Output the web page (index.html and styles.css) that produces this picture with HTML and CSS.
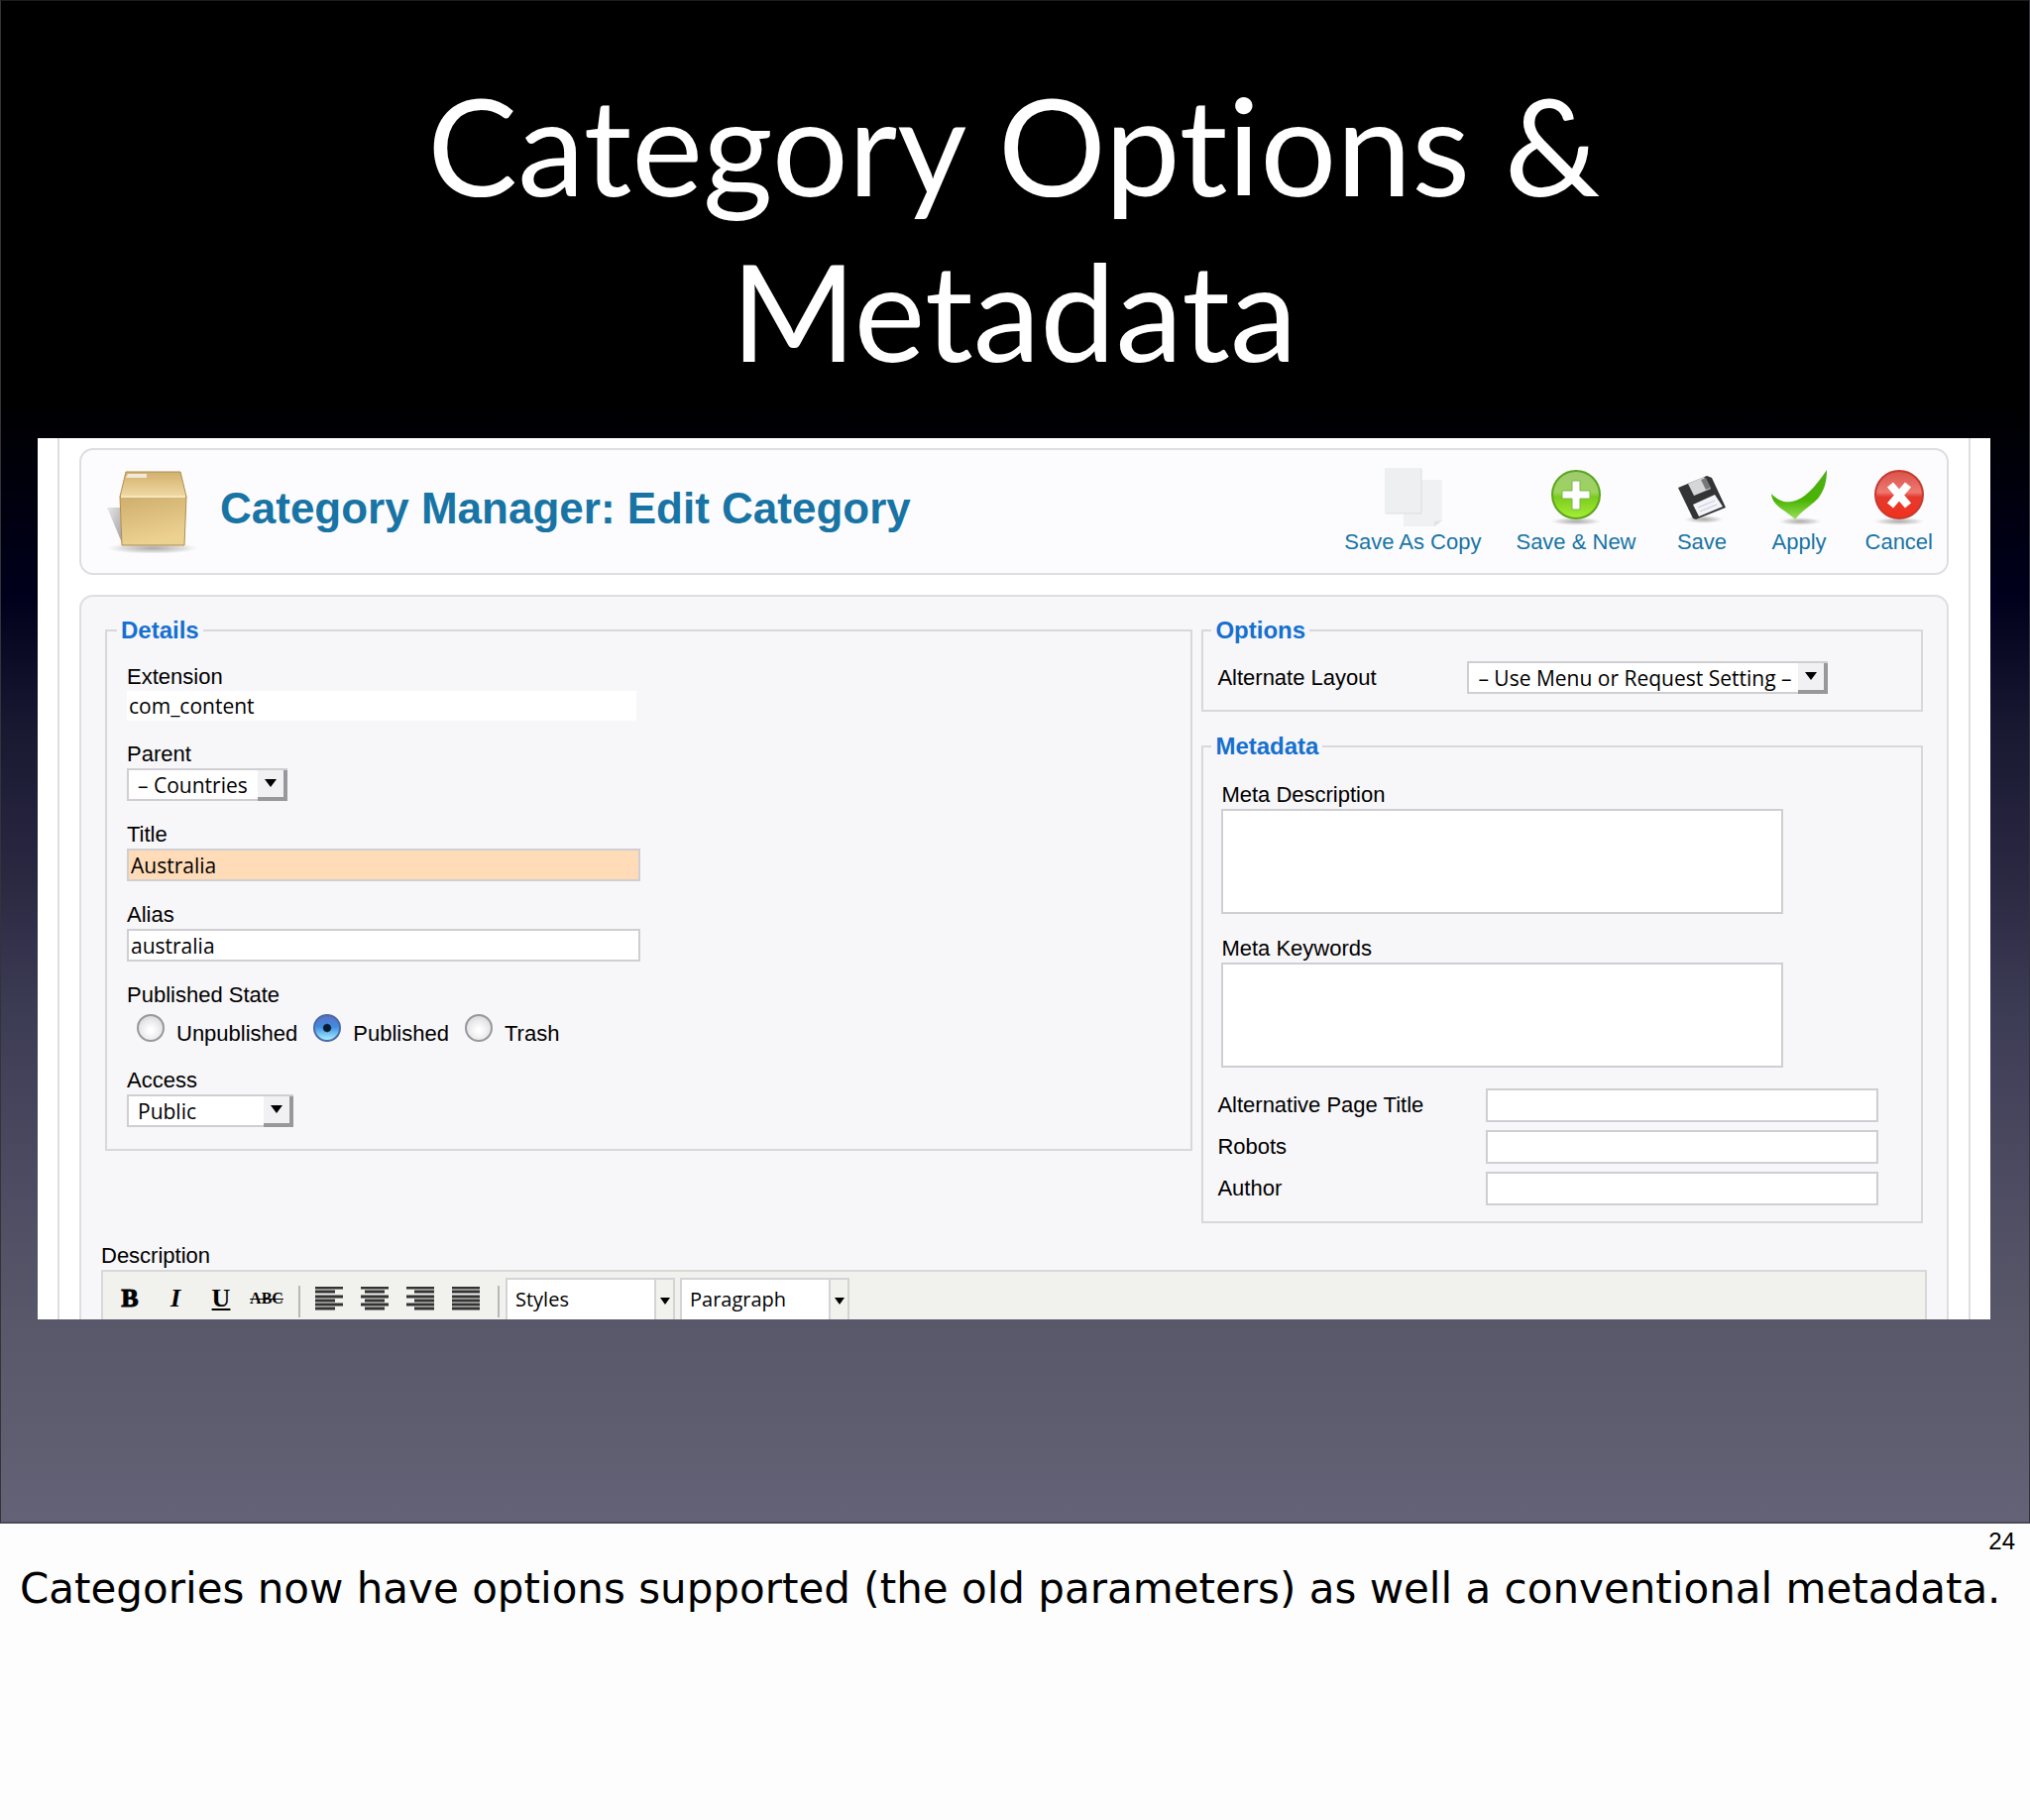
FILE: index.html
```html
<!DOCTYPE html>
<html lang="en">
<head>
    <meta charset="UTF-8">
    <meta name="viewport" content="width=device-width, initial-scale=1.0">
    <title>Category Options &amp; Metadata</title>
    <link rel="stylesheet" href="styles.css">
</head>
<body>

    <section class="slide">
        <h1>Category Options &amp;<br>Metadata</h1>

        <div class="screen">
            <div class="page">
                <header class="toolbar">
                    <svg class="box-icon" width="96" height="84" viewBox="0 0 96 84">
                        <defs>
                            <linearGradient id="boxFront" x1="0" y1="0" x2="0.3" y2="1">
                                <stop offset="0" stop-color="#cfae6c"/>
                                <stop offset="1" stop-color="#ecd291"/>
                            </linearGradient>
                            <linearGradient id="boxTop" x1="0" y1="0" x2="0" y2="1">
                                <stop offset="0" stop-color="#d2b06c"/>
                                <stop offset="1" stop-color="#f0d9a4"/>
                            </linearGradient>
                            <linearGradient id="boxShade" x1="0" y1="0" x2="1" y2="1">
                                <stop offset="0" stop-color="#e8e8ea"/>
                                <stop offset="1" stop-color="#9c9c9e"/>
                            </linearGradient>
                            <radialGradient id="floor">
                                <stop offset="0" stop-color="#aaa"/>
                                <stop offset="0.7" stop-color="#e2e2e2"/>
                                <stop offset="1" stop-color="#eee" stop-opacity="0"/>
                            </radialGradient>
                        </defs>
                        <ellipse cx="48" cy="79" rx="47" ry="6" fill="url(#floor)"/>
                        <path d="M2 38h13l3 38z" fill="url(#boxShade)"/>
                        <path d="M21 2h55l6 25H15z" fill="url(#boxTop)" stroke="#b08d4c"/>
                        <path d="M15 27h67l-2 49H17z" fill="url(#boxFront)" stroke="#b08d4c"/>
                        <path d="M16 27h65" stroke="#f6e6be" stroke-width="2"/>
                        <path d="M23 4h19v4H21z" fill="#eee9d8"/>
                    </svg>
                    <h2>Category Manager: Edit Category</h2>
                    <nav class="actions">
                        <button type="button">
                            <svg width="60" height="64" viewBox="0 0 60 64">
                                <path d="M21 14h39v41l-7 6H21z" fill="#f0f1f2"/>
                                <path d="M60 55l-8 1v5z" fill="#e2e3e4"/>
                                <path d="M2 2h37v46H2z" fill="#eeeff0"/>
                                <path d="M39 3v45H3" fill="none" stroke="#dcdddf"/>
                            </svg>
                            Save As Copy
                        </button>
                        <button type="button">
                            <svg width="60" height="64" viewBox="0 0 60 64">
                                <defs>
                                    <linearGradient id="green" x1="0" y1="0" x2="0" y2="1">
                                        <stop offset="0" stop-color="#9fca72"/>
                                        <stop offset="0.45" stop-color="#9cd45c"/>
                                        <stop offset="0.55" stop-color="#7ccc1c"/>
                                        <stop offset="1" stop-color="#a6ee38"/>
                                    </linearGradient>
                                </defs>
                                <ellipse cx="30" cy="56" rx="26" ry="4" fill="url(#floor)"/>
                                <circle cx="30" cy="29" r="24" fill="url(#green)" stroke="#5ba51c" stroke-width="2"/>
                                <path d="M26 15h8v10h10v8H34v11h-8V33H16v-8h10z" fill="#fff" stroke="#7cb84a"/>
                            </svg>
                            Save &amp; New
                        </button>
                        <button type="button">
                            <svg width="60" height="64" viewBox="0 0 60 64">
                                <ellipse cx="32" cy="54" rx="20" ry="4" fill="url(#floor)"/>
                                <path d="M6 22l29-12 5 2 14 30-30 12-3-1z" fill="#333436"/>
                                <path d="M16 18l16-7 7 12-17 7z" fill="#d5d6d8"/>
                                <path d="M29 14l5-2 5 10-5 2z" fill="#77787b"/>
                                <path d="M21 39l22-10 8 12-24 10z" fill="#f4f4f8"/>
                                <path d="M26 42l17-7M28 46l17-7" stroke="#c5c7e0"/>
                            </svg>
                            Save
                        </button>
                        <button type="button">
                            <svg width="60" height="64" viewBox="0 0 60 64">
                                <defs>
                                    <linearGradient id="check" x1="0" y1="0" x2="0" y2="1">
                                        <stop offset="0" stop-color="#4fae1c"/>
                                        <stop offset="0.6" stop-color="#48b400"/>
                                        <stop offset="1" stop-color="#9be05a"/>
                                    </linearGradient>
                                </defs>
                                <ellipse cx="31" cy="56" rx="22" ry="4" fill="url(#floor)"/>
                                <path d="M2 28c8 8 14 9 20 8C36 34 47 20 58 4c0 13-3 21-9 29-8 8-16 12-23 21C16 44 3 41 2 28z" fill="url(#check)"/>
                            </svg>
                            Apply
                        </button>
                        <button type="button">
                            <svg width="60" height="64" viewBox="0 0 60 64">
                                <defs>
                                    <linearGradient id="red" x1="0" y1="0" x2="0" y2="1">
                                        <stop offset="0" stop-color="#d9534a"/>
                                        <stop offset="0.45" stop-color="#ee7870"/>
                                        <stop offset="0.55" stop-color="#e43a2e"/>
                                        <stop offset="1" stop-color="#f4301c"/>
                                    </linearGradient>
                                </defs>
                                <ellipse cx="30" cy="56" rx="26" ry="4" fill="url(#floor)"/>
                                <circle cx="30" cy="29" r="24" fill="url(#red)" stroke="#c63a30" stroke-width="2"/>
                                <path d="M21 19l18 21M39 19L21 40" stroke="#fff" stroke-width="8"/>
                            </svg>
                            Cancel
                        </button>
                    </nav>
                </header>

                <form class="content">
                    <div class="columns">
                        <fieldset class="details">
                            <legend>Details</legend>
                            <div class="field">
                                <label for="extension">Extension</label>
                                <input class="plain" type="text" id="extension" value="com_content" readonly>
                            </div>
                            <div class="field">
                                <label for="parent">Parent</label>
                                <span class="select parent"><select id="parent"><option>– Countries</option></select></span>
                            </div>
                            <div class="field">
                                <label for="title">Title</label>
                                <input class="required" type="text" id="title" value="Australia">
                            </div>
                            <div class="field">
                                <label for="alias">Alias</label>
                                <input type="text" id="alias" value="australia">
                            </div>
                            <div class="field" role="radiogroup" aria-labelledby="state">
                                <span class="label" id="state">Published State</span>
                                <div class="radios">
                                    <input type="radio" name="published" id="unpublished">
                                    <label for="unpublished">Unpublished</label>
                                    <input type="radio" name="published" id="published" checked>
                                    <label for="published">Published</label>
                                    <input type="radio" name="published" id="trash">
                                    <label for="trash">Trash</label>
                                </div>
                            </div>
                            <div class="field">
                                <label for="access">Access</label>
                                <span class="select access"><select id="access"><option>Public</option></select></span>
                            </div>
                        </fieldset>

                        <div class="side">
                            <fieldset class="options">
                                <legend>Options</legend>
                                <div class="row">
                                    <label for="layout">Alternate Layout</label>
                                    <span class="select layout"><select id="layout"><option>– Use Menu or Request Setting –</option></select></span>
                                </div>
                            </fieldset>

                            <fieldset class="metadata">
                                <legend>Metadata</legend>
                                <div class="field">
                                    <label for="metadesc">Meta Description</label>
                                    <textarea id="metadesc"></textarea>
                                </div>
                                <div class="field">
                                    <label for="metakey">Meta Keywords</label>
                                    <textarea id="metakey"></textarea>
                                </div>
                                <div class="rows">
                                    <div class="row">
                                        <label for="pagetitle">Alternative Page Title</label>
                                        <input type="text" id="pagetitle">
                                    </div>
                                    <div class="row">
                                        <label for="robots">Robots</label>
                                        <input type="text" id="robots">
                                    </div>
                                    <div class="row">
                                        <label for="author">Author</label>
                                        <input type="text" id="author">
                                    </div>
                                </div>
                            </fieldset>
                        </div>
                    </div>

                    <div class="description">
                        <span class="label">Description</span>
                        <div class="editor-bar">
                            <button type="button" class="bold">B</button>
                            <button type="button" class="italic">I</button>
                            <button type="button" class="underline">U</button>
                            <button type="button" class="strike">ABC</button>
                            <span class="divider"></span>
                            <button type="button" aria-label="Align left">
                                <svg width="28" height="24" viewBox="0 0 28 24"><path d="M0 1h28M0 5h20M0 10h28M0 14h20M0 18h28M0 22h20" stroke="#333" stroke-width="3"/></svg>
                            </button>
                            <button type="button" aria-label="Align center">
                                <svg width="28" height="24" viewBox="0 0 28 24"><path d="M0 1h28M4 5h20M0 10h28M4 14h20M0 18h28M4 22h20" stroke="#333" stroke-width="3"/></svg>
                            </button>
                            <button type="button" aria-label="Align right">
                                <svg width="28" height="24" viewBox="0 0 28 24"><path d="M0 1h28M8 5h20M0 10h28M8 14h20M0 18h28M8 22h20" stroke="#333" stroke-width="3"/></svg>
                            </button>
                            <button type="button" aria-label="Justify">
                                <svg width="28" height="24" viewBox="0 0 28 24"><path d="M0 1h28M0 5h28M0 10h28M0 14h28M0 18h28M0 22h28" stroke="#333" stroke-width="3"/></svg>
                            </button>
                            <span class="divider"></span>
                            <span class="picker"><select aria-label="Styles"><option>Styles</option></select></span>
                            <span class="picker"><select aria-label="Format"><option>Paragraph</option></select></span>
                        </div>
                    </div>
                </form>
            </div>
        </div>
    </section>

    <footer class="notes">
        <span class="page-number">24</span>
        <p>Categories now have options supported (the old parameters) as well a conventional metadata.</p>
    </footer>

</body>
</html>
```
FILE: styles.css
```css
*,
*::before,
*::after {
    box-sizing: border-box;
}

body {
    margin: 0;
    background: #fdfdfd;
    color: #000;
    font-family: "Liberation Sans", Arial, sans-serif;
    font-size: 22px;
}

.slide {
    padding: 61px 39px 204px 37px;
    border: 1px solid #33333c;
    border-color: #1c1c1c #33333c #4b4b58;
    border-bottom-width: 2px;
    background: linear-gradient(#000 0%, #000 26%, #00001c 39%, #191932 48%, #2b2842 58%, #3c3b54 66%, #4a4960 76%, #59586a 87%, #636276 100%);
}

h1 {
    margin: 0 0 46px;
    color: #fff;
    font-family: Lato, "Gill Sans", sans-serif;
    font-size: 136px;
    font-weight: 400;
    font-variant-ligatures: none;
    line-height: 167px;
    text-align: center;
}

.screen {
    padding: 0 20px;
    background: #fff;
}

.page {
    padding: 10px 20px 0;
    border: solid #dedee2;
    border-width: 0 2px;
}

.toolbar {
    display: flex;
    align-items: center;
    height: 128px;
    margin-bottom: 20px;
    padding-left: 24px;
    border: 2px solid #dedee2;
    border-radius: 14px;
    background: #fcfcfe;
}

.toolbar h2 {
    margin: 0 auto 6px 20px;
    color: #1874a4;
    font-size: 44px;
    line-height: 50px;
}

button {
    padding: 0;
    border: none;
    background: none;
    color: #000;
    cursor: pointer;
}

.actions {
    display: flex;
    gap: 9px;
    padding: 0 1px 2px 0;
}

.actions button {
    display: flex;
    flex-direction: column;
    align-items: center;
    min-width: 89px;
    padding: 0 13px;
    color: #1874a4;
    font: 22px/26px "Liberation Sans", Arial, sans-serif;
}

.content {
    padding: 20px 20px 0;
    border: 2px solid #dedee2;
    border-bottom: none;
    border-radius: 14px 14px 0 0;
    background: #f7f6f9;
}

.columns {
    display: grid;
    grid-template-columns: 1098fr 728fr;
    gap: 9px;
    align-items: start;
    padding: 0 4px;
}

fieldset {
    display: flex;
    flex-direction: column;
    gap: 20px;
    min-width: 0;
    margin: 0;
    border: 2px solid #d8d8dc;
}

legend {
    margin-left: -10px;
    padding: 0 4px;
    color: #1570cf;
    font-size: 24px;
    font-weight: bold;
    line-height: 28px;
}

.details {
    padding: 19px 20px 22px;
}

.side {
    display: flex;
    flex-direction: column;
    gap: 21px;
}

.options {
    padding: 17px 14px 16px;
}

.metadata {
    gap: 21px;
    padding: 21px 18px 16px;
}

.options legend {
    margin-left: -6px;
}

.field label,
.label {
    display: block;
    line-height: 28px;
}

.field {
    display: flex;
    flex-direction: column;
    align-items: flex-start;
}

input[type="text"],
textarea,
select {
    border: 2px solid #cfcfd3;
    border-radius: 0;
    background: #fff;
    color: #000;
    font: 21px/26px "Open Sans", "Lucida Grande", sans-serif;
    outline: none;
}

input[type="text"] {
    width: 518px;
    height: 33px;
    padding: 0 2px;
}

input.plain[type="text"] {
    width: 514px;
    height: 30px;
    border: none;
}

input.required {
    background: #ffdbb8;
}

textarea {
    width: 567px;
    height: 106px;
    resize: none;
}

.select {
    position: relative;
    display: block;
}

.select select {
    display: block;
    width: 100%;
    height: 33px;
    padding: 0 9px;
    appearance: none;
}

/* bevelled arrow button */
.select::before {
    content: "";
    position: absolute;
    top: 2px;
    right: 0;
    width: 30px;
    height: 31px;
    border: solid #98989c;
    border-width: 0 4px 4px 0;
    background: #f1f1f3;
    pointer-events: none;
}

.select::after,
.picker::after {
    content: "";
    position: absolute;
    top: 11px;
    right: 11px;
    border: solid transparent;
    border-width: 8px 6px 0;
    border-top-color: #000;
    pointer-events: none;
}

.parent {
    width: 162px;
}

.access {
    width: 168px;
}

.layout {
    width: 364px;
}

.radios {
    display: flex;
    height: 38px;
    padding-left: 10px;
}

.radios input {
    width: 28px;
    height: 28px;
    margin: 5px 12px 0 0;
    border: 2px solid #98989c;
    border-radius: 50%;
    background: radial-gradient(circle at 50% 60%, #fff 10%, #e6e6ea 60%, #c4c4c8);
    appearance: none;
}

.radios input:checked {
    border-color: #4a6aa8;
    background: radial-gradient(circle, #0a1830 20%, transparent 28%), linear-gradient(#5d6fc4, #3c8ee0 45%, #a8f0ff);
}

.radios label {
    margin-right: 16px;
    padding-top: 12px;
    line-height: 26px;
}

.row {
    display: flex;
    align-items: center;
}

.row label {
    width: 252px;
    line-height: 28px;
}

.rows {
    display: flex;
    flex-direction: column;
    gap: 8px;
    margin-left: -4px;
}

.rows label {
    width: 271px;
}

.rows input[type="text"] {
    width: 396px;
    height: 34px;
}

.description {
    margin-top: 19px;
}

.editor-bar {
    display: flex;
    height: 50px;
    padding: 6px 4px 0;
    border: 2px solid #d8d8d8;
    border-bottom: none;
    background: #f1f1ee;
}

.editor-bar button {
    display: flex;
    align-items: center;
    justify-content: center;
    width: 46px;
    height: 42px;
    font: bold 26px/32px "Liberation Serif", "Times New Roman", serif;
}

.editor-bar .bold {
    -webkit-text-stroke: 1px #000;
}

.editor-bar .italic {
    font-style: italic;
}

.editor-bar .underline {
    text-decoration: underline;
}

.editor-bar .strike {
    font-size: 16px;
    text-decoration: line-through;
}

.divider {
    width: 2px;
    height: 32px;
    margin: 8px 6px 0 9px;
    background: #b8b8b8;
}

.picker {
    position: relative;
    width: 171px;
    margin-right: 5px;
}

.picker select {
    width: 100%;
    height: 42px;
    padding: 0 8px;
    border-bottom: none;
    border-color: #d4d4d6;
    background: linear-gradient(90deg, transparent 148px, #d4d4d6 148px, #d4d4d6 150px, #f1f1ee 150px) #fff;
    font-size: 20px;
    appearance: none;
}

.picker::after {
    top: 20px;
    right: 5px;
    border-width: 7px 5px 0;
}

.notes {
    padding: 2px 15px 0 20px;
}

.page-number {
    display: block;
    font-size: 24px;
    line-height: 32px;
    text-align: right;
}

.notes p {
    margin: 4px 0 0;
    font-family: "DejaVu Sans", "Lucida Grande", sans-serif;
    font-size: 42px;
    line-height: 56px;
}
```
